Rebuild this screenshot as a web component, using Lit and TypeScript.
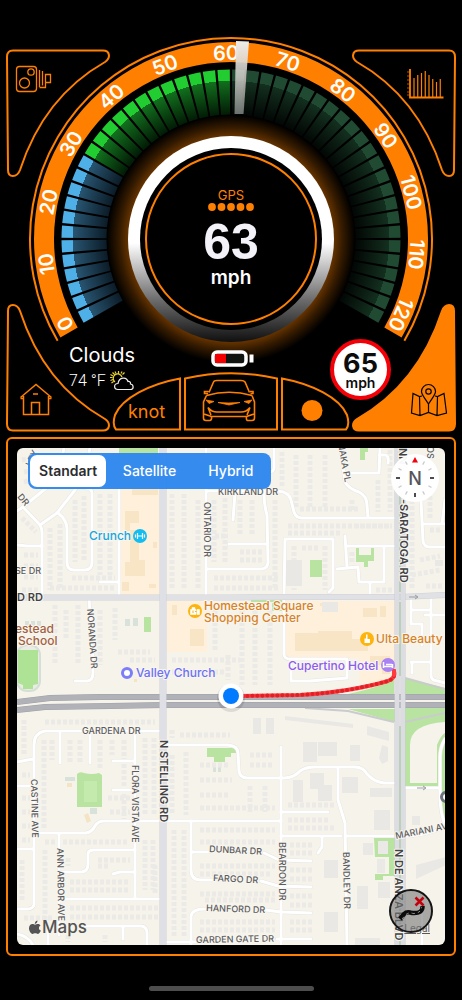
import { LitElement, html, svg, css } from "lit";
import { customElement, state, property } from "lit/decorators.js";
import { classMap } from "lit/directives/class-map.js";

const CX = 231;
const CY = 239;
const point = (r: number, deg: number) => {
  const a = (deg * Math.PI) / 180;
  return `${(CX + r * Math.cos(a)).toFixed(2)} ${(CY + r * Math.sin(a)).toFixed(2)}`;
};
const sector = (r1: number, r2: number, a: number, b: number) => {
  const large = b - a > 180 ? 1 : 0;
  return `M${point(r2, a)}A${r2} ${r2} 0 ${large} 1 ${point(r2, b)}L${point(r1, b)}A${r1} ${r1} 0 ${large} 0 ${point(r1, a)}Z`;
};

@customElement("speed-dial")
export class SpeedDial extends LitElement {
  @property({ type: Number }) speed = 63;
  static styles = css`
    :host { display: block; }
    svg { display: block; width: 100%; overflow: visible; }
    .tick { font: 600 20px Inter, "Liberation Sans", sans-serif; fill: #fff; text-anchor: middle; }
    .rim { fill: none; stroke: #ff8000; stroke-width: 2; }
    .band { fill: #ff8000; }
  `;
  private fade(id: string, inner: string, outer: string, edge: string) {
    return svg`<radialGradient id=${id} gradientUnits="userSpaceOnUse" cx=${CX} cy=${CY} r="170">
      <stop offset=".73" stop-color=${inner}/><stop offset=".93" stop-color=${outer}/>
      <stop offset=".93" stop-color=${edge}/></radialGradient>`;
  }
  render() {
    const lit = Math.floor(this.speed / 2.5) - 1;
    const bars = Array.from({ length: 48 }, (_, i) => {
      const a = 150 + i * 5;
      const tone = i >= lit ? "dim" : i < 12 ? "cool" : "go";
      return svg`<path d=${sector(124.5, 169.5, a + 0.4, a + 4.6)} fill="url(#${tone})"/>`;
    });
    const ticks = Array.from({ length: 13 }, (_, i) => {
      const a = -117 + i * 19.25;
      return svg`<text class="tick" x=${CX} y=${CY - 179} transform="rotate(${a} ${CX} ${CY})">${i * 10}</text>`;
    });
    return html`<svg viewBox="6 37 450 395" role="img" aria-label="Speedometer">
      <defs>
        ${this.fade("cool", "#0b1b26", "#285572", "#4fb0e8")}
        ${this.fade("go", "#021a05", "#12701e", "#21cd30")}
        ${this.fade("dim", "#020604", "#13301f", "#214a32")}
        <radialGradient id="glow" gradientUnits="userSpaceOnUse" cx="231" cy="239" r="124">
          <stop offset=".82" stop-color="#6b3600"/><stop offset=".9" stop-color="#351b00"/><stop offset="1" stop-color="#000"/>
        </radialGradient>
        <linearGradient id="chrome" x1="0" y1="0" x2="0" y2="1">
          <stop offset=".52" stop-color="#fff"/><stop offset=".8" stop-color="#6a6a6a"/><stop offset="1" stop-color="#101010"/>
        </linearGradient>
        <linearGradient id="needle" x1="0" y1="0" x2="0" y2="1">
          <stop offset="0" stop-color="#efece8"/><stop offset=".5" stop-color="#d0cec9" stop-opacity=".85"/><stop offset="1" stop-color="#8f9792" stop-opacity=".75"/>
        </linearGradient>
      </defs>
      <path class="rim" d="M${point(201, 149.6)}A201 201 0 1 1 ${point(201, 30.4)}"/>
      <path class="band" d=${sector(177, 197, 150, 390)}/>
      ${ticks}
      ${bars}
      <circle cx="231" cy="239" r="124" fill="url(#glow)"/>
      <circle cx="231" cy="239" r="103" fill="url(#chrome)"/>
      <circle cx="231" cy="239" r="91"/>
      <circle class="rim" cx="231" cy="239" r="85"/>
      <path d="M236 41L249 41.500L243.500 114L234.500 114Z" fill="url(#needle)"/>
    </svg>`;
  }
}

const minorRoads = [
  "M64 448Q60 470 50 485L23 507L17 511", "M23 507L40 525Q42 528 42 533V595", "M40 525L57 513L75 490Q86 470 90 448",
  "M58 513Q67 520 67 529V562Q67 570 74 570H85Q92 570 92 562V493Q92 488 85 488", "M17 545L27 546H42",
  "M119 460V595M100 582H119", "M206 448V595M206 491H278Q289 492 291 500L294 512Q296 518 302 518H395",
  "M207 569H262Q268 568 268 562L267 515Q264 505 264 493M229 544H267M233 520L235 493M274 448V468Q274 472 268 472",
  "M341 448L343 467L345 482Q349 489 359 492Q367 496 367 505L368 517M344 473H379L380 448M379 455H386Q389 457 388 463",
  "M284 597L285 539H333V588L329 592", "M345 536L347 567M346 546H395M384 546V582H359L358 567L337 569M370 583V595",
  "M431 448Q420 470 421 500L423 541Q424 547 430 547H445M422 524H445M445 500L442 524",
  "M89 598L92 640L93 672Q93 681 87 681H75", "M17 762L33 759M161 731H45Q34 733 34 745V905Q33 909 27 909H17M17 786H34M17 849H33",
  "M60 733V763M90 733V763M135 733V898M113 761H135M113 790H135", "M167 745H228Q238 746 238 753L239 771Q240 778 247 778H285Q295 777 300 771Q306 767 315 767H355Q363 767 367 774Q374 782 384 783H395",
  "M281 747V945M338 768V800L345 823L347 945", "M38 833H86Q92 832 95 826Q98 821 104 821H160M165 821H281M59 833V935",
  "M62 872H82Q88 871 88 864V854Q88 850 94 850H135M113 874L120 872H135M62 899H160M85 926H140Q147 926 147 933V945M123 926V939M48 930V945",
  "M17 934Q28 936 33 945", "M191 821V870Q191 880 201 880H213M191 852H209M205 909Q192 909 191 916V945M167 942H197",
  "M281 812H328M281 836H341M346 836H395M322 836V847L318 853", "M264 853L279 860L311 861M261 881L278 886L311 887M266 910L281 912L311 913M277 939H311",
  "M396 837Q425 836 445 827", "M284 600V655Q285 659 290 659H347V678L310 681H291V660",
  "M411 600V624H422V645M411 610H431M431 598V676Q432 681 438 681L445 683M411 662H431M412 662V673M425 615H445",
  "M445 739Q440 747 440 757V800Q441 815 445 825M405 788H440M422 900V945",
];
const houseRows = [
  "M22 460L56 456M24 472L50 468M24 482L38 478M22 518L36 532M24 555H38M24 566H38M24 577H38M22 590H38", "M50 528V590M60 524V590M75 500V562M84 496V562M100 494V575M110 494V575",
  "M72 578H115M50 588H115", "M172 494V590M184 494V590M198 500V590M214 500V562M225 498V562M240 500V536M252 500V536M214 578H280M214 588H280M275 500V590M240 552H262M240 560H262",
  "M215 455V485M228 455V485M282 452V486M296 455V508M310 455V508M325 455V508M352 500V512M378 480V512M390 450V512M300 509H360M215 536H228",
  "M288 526H392M288 533H340M355 526H392M294 546V590M325 546V590M302 548H318M352 552V562M376 590H392",
  "M412 500V590M430 490V518M430 530H442M420 560L440 556M412 575L440 570M426 586H442",
  "M55 605V665M66 610V640M78 605V665M100 610V665M115 608V640M130 660H155M118 652H150M172 660H240M172 672H225M215 610V650M228 655V680M242 610V685M255 610V685M270 610V685",
  "M45 722H155M44 740V830M52 740V760M70 740V763M80 740V763M100 740V770M112 740V755M124 740V820M145 738V815M154 738V815M108 798H130M110 812H130",
  "M22 775H30M22 798H30M22 812H30M22 826H30M22 840H30M22 860V900M45 842H128M68 858V866M98 860H130M98 866H110M70 882H130M70 890H130M70 908H158M70 917H158M24 720V755M145 840V890M153 840V890M45 850V920M24 918H52",
  "M172 730V738M180 735H230M172 755V815M186 752V815M200 765H230M200 780H232M200 795H230M200 808H275M250 786V812M265 786V812M250 755H272M250 765H272",
  "M174 830V936M184 830V936M200 830H275M200 842H275M200 866H275M200 874H270M200 894H275M205 900H275M200 922H275M200 930H275M288 805H335M288 820H330M288 828H335M290 845H312M290 853H312M290 870H312M290 879H312M290 896H312M290 905H312M290 922H312M290 930H312",
  "M155 865V895M105 935V942M68 935V942",
];
const blocks = [
  "M303 742h14v20h-14zM318 742h19v14h-19zM350 745h10v16h-10zM293 780h10v22h-10zM310 773h14v16h-14zM318 785h14v16h-14zM342 777h16v16h-16zM370 788h22v9h-22zM367 726l22 6v9l-22-6zM382 745l6 2v14l-6 3l-3-6z",
  "M285 716l68 8v4l-68-8zM253 718h8v16h-8zM266 718h8v16h-8zM374 810h16v20h-16zM324 860h14v18h-14zM324 912h14v20h-14zM357 886h11v23h-11zM378 882h12v16h-12zM363 843h10v12h-10zM412 816h8v9h-8zM416 865l30-8v8l-30 14zM355 938h25v7h-25z",
  "M286 560h16v26h-16zM322 602h16v10h-16zM435 560h8v6h-8z",
];

@customElement("road-map")
export class RoadMap extends LitElement {
  static styles = css`
    :host { display: block; }
    svg { display: block; width: 100%; }
    .street, .avenue, .poi { font-family: Inter, "Liberation Sans", sans-serif; paint-order: stroke; stroke: #f8f6f0; stroke-width: 2; stroke-linejoin: round; }
    .street { font-size: 9px; font-weight: 500; fill: #5c5c5e; }
    .avenue { font-size: 11px; font-weight: 600; fill: #434346; }
    .poi { font-size: 12px; font-weight: 500; }
    .casing, .lane { fill: none; stroke-linecap: round; stroke-linejoin: round; }
    .casing { stroke: #e7e5e1; stroke-width: 4; }
    .lane { stroke: #fff; stroke-width: 3; }
    .houses { fill: none; stroke: #eceae6; stroke-width: 5; stroke-dasharray: 4 2; }
  `;
  private street(x: number, y: number, text: string, turn = 0, kind = "street") {
    return svg`<text class=${kind} transform="translate(${x} ${y}) rotate(${turn})">${text}</text>`;
  }
  private poi(x: number, y: number, text: string, color: string) {
    return svg`<text class="poi" x=${x} y=${y} fill=${color}>${text}</text>`;
  }
  render() {
    return html`<svg viewBox="17 448 428 497" role="img" aria-label="Map">
      <rect x="17" y="448" width="428" height="497" fill="#f6f3eb"/>
      <g fill="#fef0da">
        <path d="M120 460H159V595H120ZM167 601H207V652H167ZM284 601H395V683H359V658H284Z"/>
      </g>
      <g fill="#f8e5c6">
        <path d="M125 511h14v12h-9v7h9v30h6v16h-20v-14h5v-31h-5zM132 485h26v10h-26zM122 582h7v9h-7zM149 584h7v4h-7zM153 542h4v6h-4zM190 629h14v17h-14zM295 633h23v-2h34v8h16v12h-73zM363 608h14v9h-14zM380 606h6v11h-6zM320 603h10v3h-10zM172 605h5v10h-5zM370 656h20v18h-8v-9h-12z"/>
      </g>
      <g fill="#b9e3a0">
        <path d="M119 448h39v12h-39zM310 560h12v17h-12zM360 448h8v4h-3v8h-5zM356 548h3v7h12v-7h3v13h-6v6h-4v-5h-8zM251 599h32v3h-32zM272 603h10v8h-10zM144 617h7v15h-7zM207 748h24v9h-6v5h-11v-5h-7zM231 748h6v5h-6zM374 838h21v38h-12v4h-8v-6h14v-17h-14z"/>
        <path d="M77 774Q80 771 84 773Q92 775 99 773L102 775V807H77Z"/>
        <path d="M348 694Q385 686 394 678V694ZM348 709H395V722ZM405 678L445 688V694H405ZM405 708H445V713L405 722ZM405 722L445 713V722Q410 724 410 745V783H437V745Q441 735 445 733V825L438 800V786H405Z"/>
      </g>
      <g fill="#ebe9e5"><path d="M378 841h10v13h-10zM377 859h8v14h-8z"/></g>
      <path d="M84 781h13v21h-13z" fill="#c5eaae"/>
      <rect x="17" y="645" width="23" height="46" rx="10" fill="#e9ece2" stroke="#d6dfd6" stroke-width="2"/>
      <path d="M18 650H38V684L33 685V689H23V685L18 683Z" fill="#aee294"/>
      <path d="M125 619h5v7h-5zM133 618h5v8h-5zM25 621h4v5h-4zM31 621h4v5h-4zM37 621h4v5h-4zM65 777h10v4h-10zM213 765h3v7h-3zM218 765h3v7h-3zM90 808h7v6h-7z" fill="#d9e2da"/>
      <path d="M67 783h5v4h-5zM84 815l4-2l3 8l-4 2zM134 679h3v3h-3z" fill="#f4e4c4"/>
      ${houseRows.map((d) => svg`<path class="houses" d=${d}/>`)}
      ${blocks.map((d) => svg`<path d=${d} fill="#eae8e5"/>`)}
      ${minorRoads.map((d) => svg`<path class="casing" d=${d}/>`)}
      ${minorRoads.map((d) => svg`<path class="lane" d=${d}/>`)}
      <g fill="none">
        <path d="M405 678L445 689M445 713L405 722M394 722L348 711L305 708" stroke="#c9cbcd" stroke-width="2"/>
        <path d="M17 702L50 698L100 697L445 697" stroke="#9fa1a8" stroke-width="6"/>
        <path d="M17 710L45 707L110 706L163 705H445" stroke="#9fa1a8" stroke-width="6"/>
        <path d="M17 702L50 698L100 697L445 697" stroke="#b0b2b8" stroke-width="5"/>
        <path d="M17 710L45 707L110 706L163 705H445" stroke="#b0b2b8" stroke-width="5"/>
        <path d="M17 597.500H231L300 597H400L445 595" stroke="#cfd1d6" stroke-width="6"/>
        <path d="M17 597.500H231L300 597H400L445 595" stroke="#e0e1e5" stroke-width="5"/>
        <path d="M163 448V945" stroke="#cfd1d6" stroke-width="7"/>
        <path d="M163 448V945" stroke="#dfe0e5" stroke-width="6"/>
        <path d="M397 448V945M403 448V945" stroke="#c9cbd0" stroke-width="5"/>
        <path d="M397 448V945M403 448V945" stroke="#dcdde2" stroke-width="4"/>
        <path d="M400 448V592M400 602V676M400 726V945" stroke="#bccfb7" stroke-width="2"/>
        <path d="M409 597H417M415 595L418 597L415 599M417 788H425M423 786L426 788L423 790" stroke="#9b9da0"/>
        <path d="M394 671Q396 678 388 681Q350 692 300 695L240 696" stroke="#ff3b3f" stroke-width="4" stroke-linecap="round"/>
        <path d="M394 671Q396 678 388 681Q350 692 300 695L240 696" stroke="#de2027" stroke-width="4" stroke-dasharray="0 5" stroke-linecap="round"/>
      </g>
      ${this.street(218, 495, "KIRKLAND DR")}
      ${this.street(204, 502, "ONTARIO DR", 90)}
      ${this.street(338, 444, "NAKA PL", 80)}
      ${this.street(15, 574, "SE DR")}
      ${this.street(17, 497, "DR", 50)}
      ${this.street(31, 467, "LEY", -65)}
      ${this.street(427, 446, "OS", 90)}
      ${this.street(87, 609, "NORANDA DR", 86)}
      ${this.street(82, 734, "GARDENA DR")}
      ${this.street(31, 779, "CASTINE AVE", 89)}
      ${this.street(132, 765, "FLORA VISTA AVE", 90)}
      ${this.street(57, 848, "ANN ARBOR AVE", 89)}
      ${this.street(209, 852, "DUNBAR DR", 3)}
      ${this.street(213, 881, "FARGO DR", 3)}
      ${this.street(206, 911, "HANFORD DR", 2)}
      ${this.street(196, 943, "GARDEN GATE DR", -1)}
      ${this.street(279, 842, "BEARDON DR", 90)}
      ${this.street(343, 852, "BANDLEY DR", 89)}
      ${this.street(396, 839, "MARIANI AV", -11)}
      ${this.street(17, 601, "D RD", 0, "avenue")}
      ${this.street(160, 740, "N STELLING RD", 90, "avenue")}
      ${this.street(399, 448, "NN", 90, "avenue")}
      ${this.street(400, 499, "-SARATOGA RD", 90, "avenue")}
      ${this.street(395, 849, "N DE ANZA BLVD", 90, "avenue")}
      ${this.poi(89, 540, "Crunch", "#16a6e0")}
      ${this.poi(204, 610, "Homestead Square", "#d9821f")}
      ${this.poi(204, 622, "Shopping Center", "#d9821f")}
      ${this.poi(376, 643, "Ulta Beauty", "#d9821f")}
      ${this.poi(288, 670, "Cupertino Hotel", "#8c5cf0")}
      ${this.poi(136, 677, "Valley Church", "#6d70f5")}
      ${this.poi(15, 633, "estead", "#a3613f")}
      ${this.poi(18, 645, "School", "#a3613f")}
      <g>
        <circle cx="140" cy="536" r="7" fill="#12bdf2"/>
        <path d="M137.500 533v6M142.500 533v6M135.500 534.500v3M144.500 534.500v3M137 536h6" stroke="#fff" stroke-width="1.200"/>
        <circle cx="195" cy="611" r="7" fill="#fdb40d"/>
        <path d="M190.500 609.500h5.500v5h-5.500zM197 609.500h2.500v5h-2.500zM192 609.500v-2h3v2" fill="#fff" stroke="#fff" stroke-width=".6"/>
        <path d="M193 610.500v2.500M195 611.500h1.500" stroke="#fdb40d"/>
        <circle cx="367" cy="639" r="7" fill="#fdb40d"/>
        <path d="M364.500 643v-4.500h1.500v-4h1.500v4.500h2.500v4z" fill="#fff"/>
        <circle cx="388" cy="665" r="7" fill="#a982f3"/>
        <path d="M383.500 662v6M383.500 666.500h9M392.500 664v4M386 664.500h6" stroke="#fff" stroke-width="1.500" fill="none"/>
        <circle cx="127" cy="673" r="4.500" fill="#fff" stroke="#7b7ef8" stroke-width="3"/>
        <circle cx="446" cy="797" r="4.500" fill="#fff" stroke="#6d727b" stroke-width="3"/>
      </g>
      <path d="M394 671L394 675" stroke="#ff3b3f" stroke-width="4" stroke-linecap="round"/>
      <circle cx="231" cy="698" r="14" fill="#000" opacity=".1"/>
      <circle cx="231" cy="696" r="12.500" fill="#fff"/>
      <circle cx="231" cy="696" r="8" fill="#007aff"/>
    </svg>`;
  }
}

const cornerPath = "M13 50.500H103C110 50.500 111 58 105 62C61 87 35 124 20 170C17 178 8 178 8 170L7 57Q7 50.500 13 50.500Z";

@customElement("app-root")
export class AppRoot extends LitElement {
  @state() private layer = "Standart";
  @state() private panel = "map";

  static styles = css`
    :host { display: block; background: #000; color: #fff; min-height: 100vh; font-family: Inter, "Liberation Sans", sans-serif; }
    .screen { display: flex; flex-direction: column; gap: 5px; padding: 37px 6px 9px; box-sizing: border-box; min-height: 100vh; }
    button { background: none; border: 0; padding: 0; color: #ff8000; font: inherit; cursor: pointer; }
    svg { display: block; }
    .dash, .map { display: grid; }
    .dash > *, .map > * { grid-area: 1 / 1; }
    .outline { fill: none; stroke: #ff8000; stroke-width: 2; }
    .line { fill: none; stroke: #ff8000; }
    .active .outline { fill: #ff8000; }
    .active .line { stroke: #000; }
    .top { align-self: start; margin-top: 12px; }
    .bottom { align-self: end; }
    .left { justify-self: start; }
    .right { justify-self: end; }
    .readout { place-self: start center; display: flex; flex-direction: column; align-items: center; margin-top: 150px; }
    .gps { color: #ff8000; font-size: 13px; line-height: 16px; }
    .speed { font: bold 50px/56px "Liberation Sans", Arial, sans-serif; color: #f3f2f8; margin-top: 3px; }
    .unit { font-size: 19px; font-weight: 600; line-height: 16px; }
    .weather { place-self: end start; margin: 0 0 41px 63px; }
    .sky { font-size: 20px; line-height: 24px; }
    .temp { display: flex; align-items: center; gap: 4px; margin-top: 4px; font: 300 16px/20px Roboto, sans-serif; }
    .battery { place-self: end center; margin: 0 0 65px 4px; }
    .limit { place-self: end end; margin: 0 65px 32px 0; width: 61px; height: 61px; box-sizing: border-box; border: 4px solid #f40009; border-radius: 50%; background: #fff; color: #0c0c0c; display: flex; flex-direction: column; align-items: center; justify-content: end; }
    .limit b { font-size: 27px; line-height: 24px; }
    .limit span { font-size: 14px; font-weight: 600; line-height: 14px; margin-bottom: 6px; }
    .tabs { place-self: end center; display: flex; gap: 3px; }
    .tab { display: grid; }
    .tab > * { grid-area: 1 / 1; }
    .tab span { place-self: end center; font-size: 18px; line-height: 24px; margin-bottom: 8px; }
    .frame { border: 2px solid #ff8000; border-radius: 6px; padding: 9px; }
    .map { border-radius: 6px; overflow: hidden; }
    .layers { place-self: start start; width: 243px; box-sizing: border-box; margin: 5px 0 0 11px; padding: 2px; border: 0; border-radius: 8px; background: #2f88edf7; display: grid; grid-template-columns: repeat(3, 1fr); gap: 5px; }
    .layer { display: grid; place-items: center; font-size: 14px; font-weight: 500; line-height: 32px; border-radius: 7px; cursor: pointer; }
    .layer.on { background: #fff; color: #2c2c2e; font-weight: 600; }
    .layer input { appearance: none; width: 0; height: 0; margin: 0; grid-area: 1 / 1; }
    .layer span { grid-area: 1 / 1; }
    .compass { place-self: start end; margin: 6px; }
    .compass text { font: 500 18px Inter, sans-serif; fill: #55555a; text-anchor: middle; }
    .brand { place-self: end start; display: flex; align-items: center; gap: 1px; margin: 0 0 8px 12px; color: #545454; font-size: 17px; font-weight: 500; line-height: 20px; }
    .legal { place-self: end end; margin: 0 15px 10px 0; color: #58585a; font-size: 10px; line-height: 14px; }
    .traffic { place-self: end end; margin: 0 12px 12px 0; }
    .home-bar { align-self: center; width: 165px; height: 5px; margin-top: 25px; border-radius: 3px; background: #4d4d4d; }
  `;

  private corner(name: string, place: string, transform: string, box: string, icon: unknown) {
    return html`<button class="${place} ${this.panel === name ? "active" : ""}" aria-label=${name} @click=${() => (this.panel = name)}>
      <svg width="104" height="130" viewBox=${box}><path class="outline" d=${cornerPath} transform=${transform}/>${icon}</svg>
    </button>`;
  }

  render() {
    const camera = svg`<g class="line" stroke-width="1.300"><rect x="16.500" y="66.500" width="20" height="25" rx="3"/><circle cx="31" cy="72" r="3.200"/><circle cx="24.500" cy="83" r="5"/><path d="M39.500 70v17M42.500 71v14.500M45.500 74.500h5v8h-5zM39.500 87.500h6v-13"/></g>`;
    const heights = [19, 22, 24, 26, 22, 18, 15, 18];
    const chart = svg`<g class="line"><path d="M410 69V97.500H443.500" stroke-width="1.800"/>
      <path d="M407 72h3M407 76h3M407 80h3M407 84h3M407 88h3M407 92h3M407 95h3" stroke-width=".7"/>
      <path d=${heights.map((h, i) => `M${(414 + i * 3.75).toFixed(2)} 97V${97 - h}`).join("")} stroke-width="1.200"/></g>`;
    const home = svg`<g class="line" stroke-width="1.500"><path d="M20.500 397.500L36 384.500L51.500 397.500M23.500 396V414.500H48.500V396M31.500 414V402.500H39.500V414M33 394H38M20.500 398.500H23M51.500 398.500H49"/></g>`;
    const pin = svg`<g class="line" stroke-width="1.200"><path d="M428.500 404C424 397 421.500 394.500 421.500 391.500A7 7 0 0 1 435.500 391.500C435.500 394.500 433 397 428.500 404Z"/><circle cx="428.500" cy="391.500" r="2.700"/><path d="M422 396L419.500 396.500L413 393.500L411.500 413L420 415.500L428.500 412.500L437 415.500L446.500 413L444 393.500L437.500 396.500L435 396M419.500 396.500L420 415.500M437.500 396.500L437 415.500M428.500 404V412.500"/></g>`;
    return html`<main class="screen">
      <section class="dash">
        <speed-dial speed="63"></speed-dial>
        <div class="readout">
          <span class="gps">GPS</span>
          <svg width="46" height="8" viewBox="0 0 46 8" fill="#ff8000">${[4, 13.5, 23, 32.5, 42].map((x) => svg`<circle cx=${x} cy="4" r="3.900"/>`)}</svg>
          <span class="speed">63</span>
          <span class="unit">mph</span>
        </div>
        ${this.corner("cameras", "top left", "", "6 49 104 130", camera)}
        ${this.corner("statistics", "top right", "matrix(-1 0 0 1 462 0)", "352 49 104 130", chart)}
        ${this.corner("home", "bottom left", "matrix(1 0 0 -1 0 481)", "6 302 104 130", home)}
        ${this.corner("map", "bottom right", "matrix(-1 0 0 -1 462 481)", "352 302 104 130", pin)}
        <div class="weather">
          <div class="sky">Clouds</div>
          <div class="temp">74 °F
            <svg width="24" height="20" viewBox="0 0 24 20" fill="none" stroke-width="1.200">
              <path d="M5 11A4.500 4.500 0 1 1 12 6M8.500 0V2.500M2.500 1.500L4.500 3.500M0 6.500H2.500M1.500 12L3.500 10.500M14.500 1.500L12.500 3.500M5 .5L6 2.500M12 .5L11 2.500M.5 3.500L3 5M.5 9.500L3 8.500" stroke="#e8d431"/>
              <path d="M8 18.500C3.500 18.500 3.500 12.500 8 12.500C9 6 16.500 5.500 18 10.500C19 10 21 11 20.500 13C24 13.500 24 18.500 20.500 18.500Z" stroke="#eee" fill="#000"/>
            </svg>
          </div>
        </div>
        <svg class="battery" width="44" height="17" viewBox="0 0 44 17" role="img" aria-label="Battery">
          <rect x="2" y="2" width="33" height="13" rx="4" fill="#101512" stroke="#fff" stroke-width="3.500"/>
          <rect x="4" y="4" width="11" height="9" fill="#f40000"/><rect x="38.500" y="4.500" width="4" height="8" fill="#fff"/>
        </svg>
        <div class="limit"><b>65</b><span>mph</span></div>
        <nav class="tabs">
          <button class="tab"><svg width="69" height="60" viewBox="112 372 69 60"><path class="outline" d="M180 378.500C150 384 122 398 115 415Q112 425 116 429.500H180Z"/></svg><span>knot</span></button>
          <button class="tab" aria-label="Vehicle"><svg width="94" height="60" viewBox="184 372 94 60"><path class="outline" d="M185 378.500Q231 368 277 378.500V429.500H185Z"/>
            <g class="line" stroke-width="1.600"><path d="M209 392.500L213.500 382Q214 380.500 217 380.500H241Q244 380.500 245 382L249.500 392.500M206.500 395.500Q229 389 252 395.500M208.500 391.500H204.500V393.500H208M250 391.500H253V393.500H250.500M206.500 395.500L203.500 402V418Q203.500 420.500 206 420.500H210Q212 420 211.500 416.500M252 395.500L254.500 402V418Q254.500 420.500 252 420.500H247.500Q246 420 246.500 416.500M211.500 416.500H246.500M204 414L211.500 416.500M254 414L246.500 416.500M208 407.500Q212 412.500 218 412H240Q246 412.500 250 407.500M208 407.500L211 415M250 407.500L247 415"/>
            <path d="M206 400L214 401.500L209 403.500ZM252 400L244 401.500L249 403.500ZM218 402.500L228.500 403L240 402.500L229 405Z" fill="#ff8000" stroke-width=".8"/></g></svg></button>
          <button class="tab" aria-label="Record"><svg width="69" height="60" viewBox="281 372 69 60"><path class="outline" d="M282 378.500C312 384 340 398 347 415Q350 425 346 429.500H282Z"/><circle cx="312" cy="410.500" r="10.500" fill="#ff8000"/></svg></button>
        </nav>
      </section>

      <section class="frame">
        <div class="map">
          <road-map></road-map>
          <fieldset class="layers" aria-label="Map type">
            ${["Standart", "Satellite", "Hybrid"].map((name) => html`
              <label class=${classMap({ layer: true, on: this.layer === name })}>
                <input type="radio" name="layer" .checked=${this.layer === name} @change=${() => (this.layer = name)} /><span>${name}</span>
              </label>`)}
          </fieldset>
          <button class="compass" aria-label="Point north">
            <svg width="48" height="48" viewBox="-24 -24 48 48"><circle r="24" fill="#fffffff5"/>
              ${Array.from({ length: 24 }, (_, i) => i % 6 && i % 2 === 0 ? svg`<path d="M0 -19V-15.500" stroke="#c9c9cc" stroke-width="1.300" transform="rotate(${i * 15})"/>` : "")}
              <path d="M-19 0H-15M15 0H19M0 15V19" stroke="#4c4c50" stroke-width="2"/><path d="M0 -21L3 -15.500H-3Z" fill="#f5000c"/>
              <text y="6.500">N</text></svg>
          </button>
          <div class="brand">
            <svg width="12" height="15" viewBox="0 0 12 15" fill="#545454"><path d="M8.500 .5Q8.500 3.500 5.800 3.900Q5.700 1.300 8.500 .5ZM6 4.700C7 4.700 7.600 4 8.900 4C10 4 11 4.600 11.500 5.400C9.200 6.800 9.600 9.700 11.900 10.600C11.200 12.300 10.200 13.900 9 13.900C7.900 13.900 7.500 13.200 6.200 13.200C4.900 13.200 4.500 13.900 3.500 13.900C1.800 13.900 0 10.800 0 8.300C0 5.600 1.700 4.100 3.400 4.100C4.600 4.100 5.300 4.700 6 4.700Z"/></svg>
            <span>Maps</span>
          </div>
          <a class="legal" href="#legal">Legal</a>
          <button class="traffic" aria-label="Clear route">
            <svg width="44" height="44" viewBox="389 889 44 44"><circle cx="411" cy="911" r="21" fill="#77777799" stroke="#151515" stroke-width="2"/>
              <path d="M400 919L404 914Q407 911 412 913Q423 914 422.500 906" fill="none" stroke="#0b0b0b" stroke-width="4.500"/>
              <path d="M402 919L406 914.500Q409 912 413 913.500Q421 913.500 421.500 907" fill="none" stroke="#8b8b88" stroke-width="1" stroke-dasharray="3 3"/>
              <path d="M415.500 897.500L423.500 905.500M423.500 897.500L415.500 905.500" stroke="#c4000c" stroke-width="2.500"/></svg>
          </button>
        </div>
      </section>
      <div class="home-bar"></div>
    </main>`;
  }
}
